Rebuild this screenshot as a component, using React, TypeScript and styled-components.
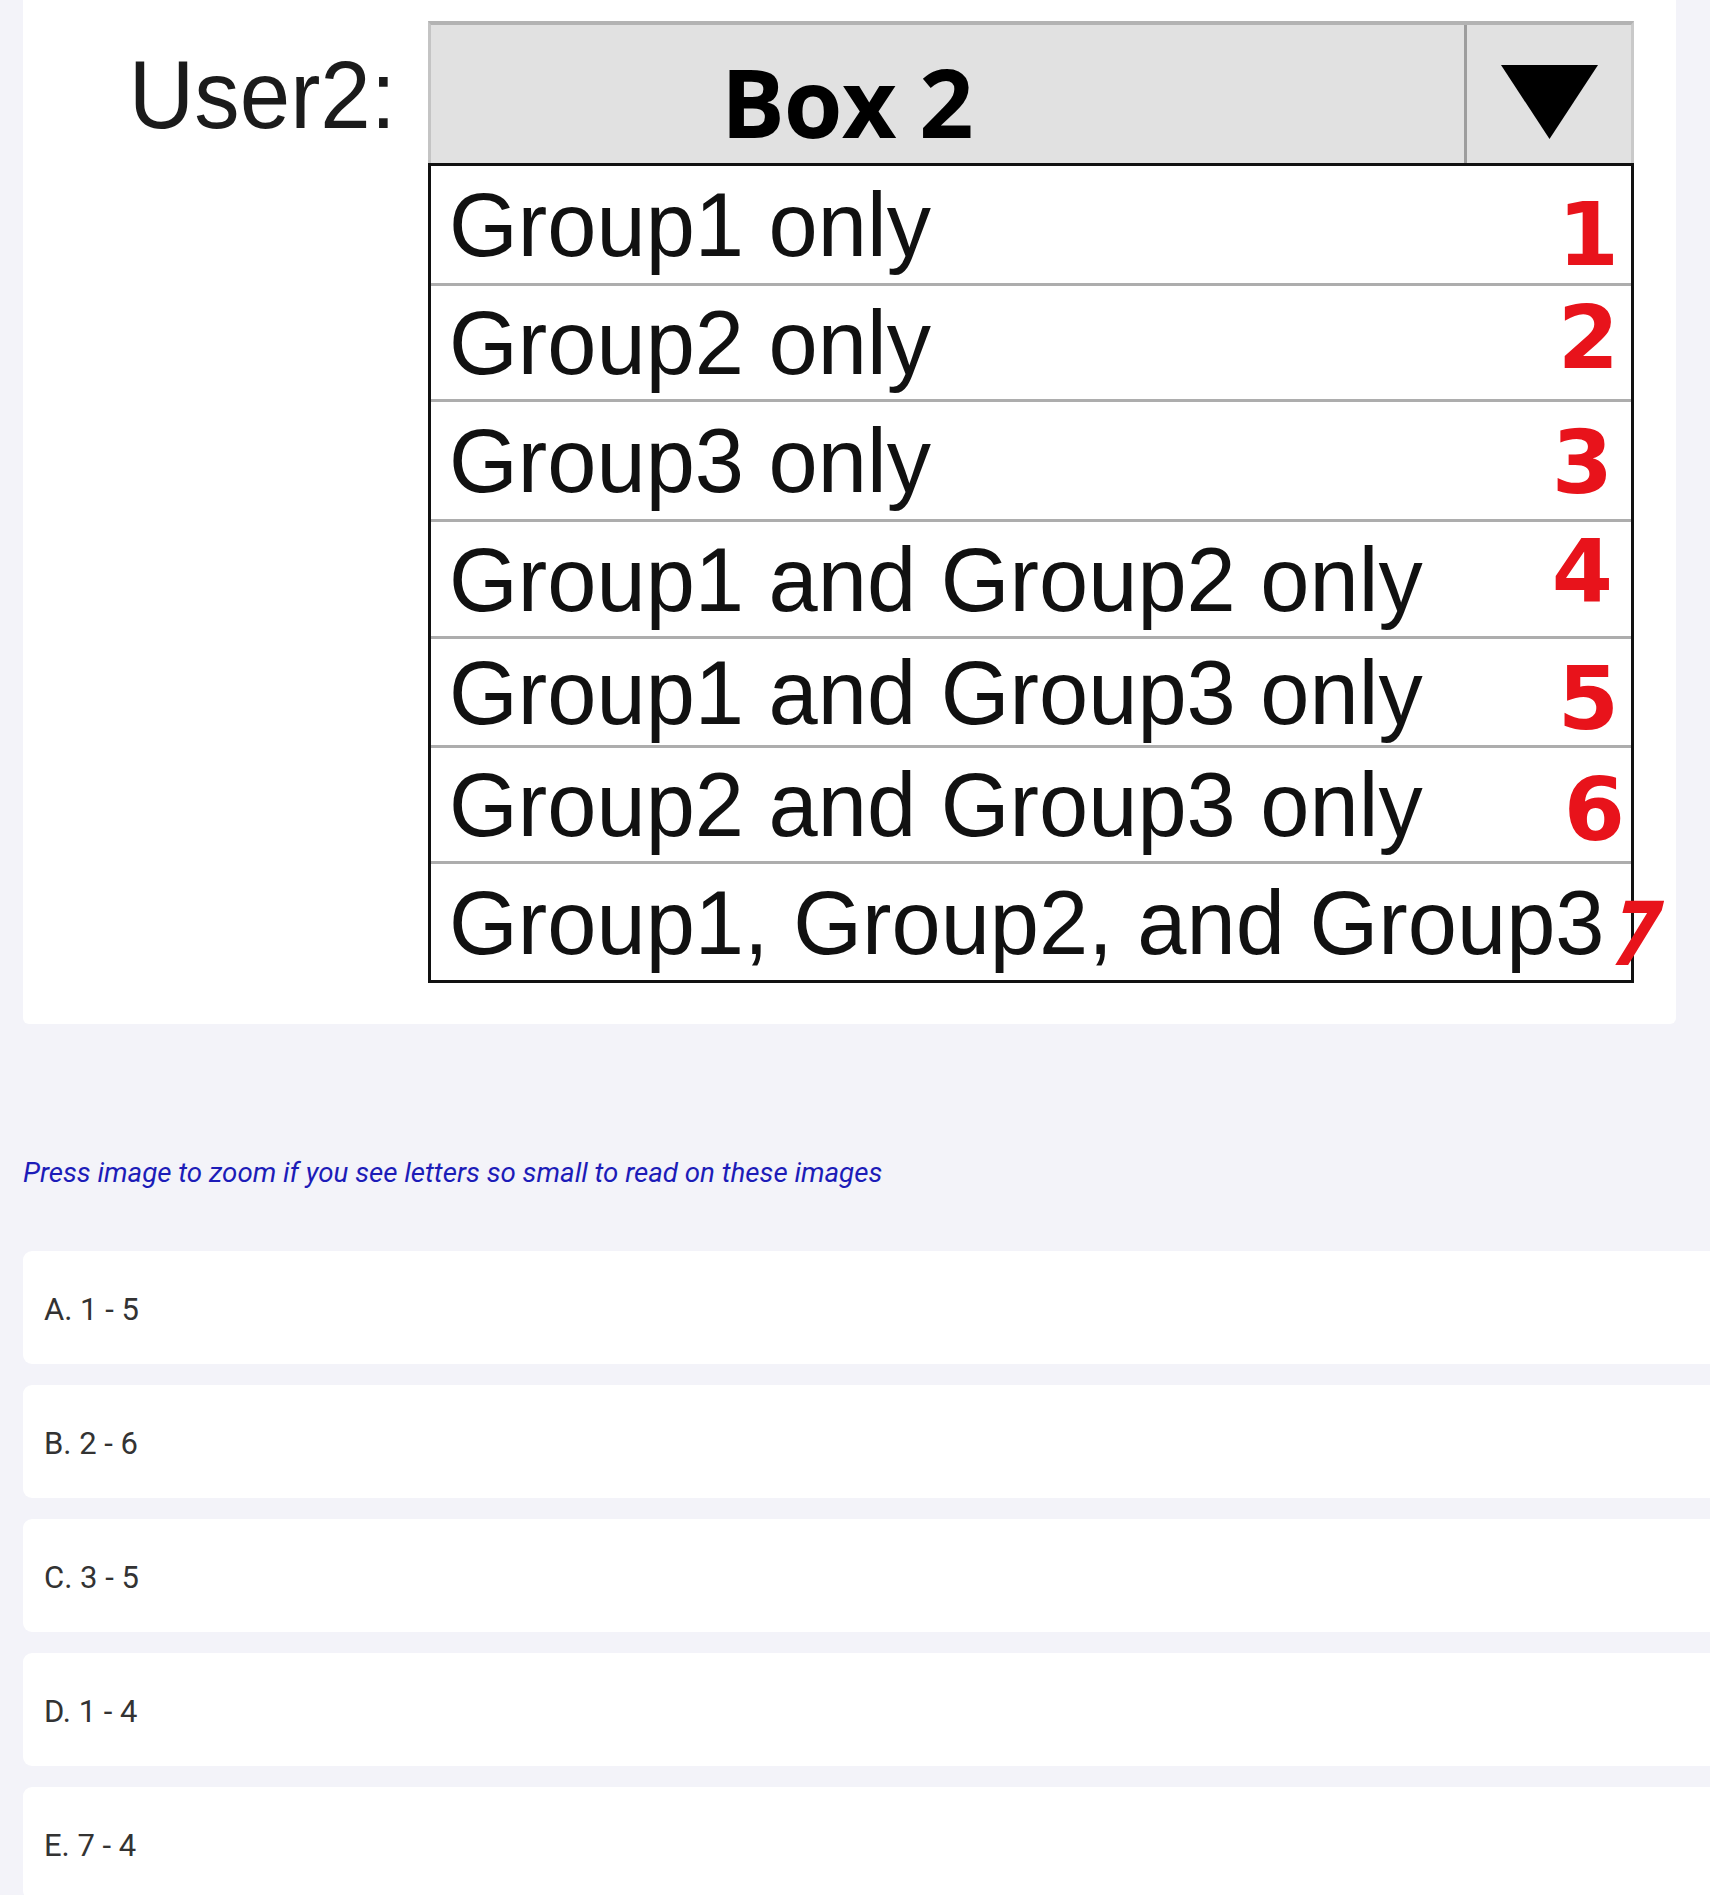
import React from "react";
import styled, { createGlobalStyle } from "styled-components";

const GlobalStyle = createGlobalStyle`
  html,
  body {
    margin: 0;
    padding: 0;
    background: #f3f3f9;
    overflow-x: hidden;
  }

  body {
    font-family: Roboto, "Liberation Sans", sans-serif;
  }
`;

const Page = styled.main`
  padding-left: 23px;
`;

const ImageCard = styled.section`
  display: flex;
  align-items: flex-start;
  box-sizing: border-box;
  width: 1653px;
  padding: 21px 0 41px;
  background: #fff;
  border-radius: 0 0 6px 6px;
`;

const Label = styled.div`
  flex-shrink: 0;
  width: 373px;
  margin: 25px 32px 0 0;
  text-align: right;
  font-family: "Liberation Sans", Arial, sans-serif;
  font-size: 97px;
  line-height: 1;
  color: #1b1b1b;
  transform: scaleX(0.935);
  transform-origin: right center;
`;

const Dropdown = styled.div`
  display: flex;
  flex-direction: column;
  width: 1206px;
`;

const Header = styled.div`
  display: flex;
  box-sizing: border-box;
  height: 142px;
  background: #e1e1e1;
  border-top: 4px solid #b3b3b3;
  border-left: 3px solid #c4c4c4;
  border-right: 3px solid #c9c9c9;
`;

const Selected = styled.div`
  flex: 1;
  display: flex;
  align-items: center;
  padding: 14px 0 0 290px;
  font-family: "Open Sans", "Liberation Sans", sans-serif;
  font-weight: 700;
  font-size: 95px;
  line-height: 1;
  color: #000;
  letter-spacing: -1px;
`;

const ArrowCell = styled.div`
  display: flex;
  align-items: center;
  justify-content: center;
  box-sizing: border-box;
  width: 167px;
  padding-top: 16px;
  border-left: 3px solid #9d9d9d;
`;

const List = styled.ul`
  list-style: none;
  margin: 0;
  padding: 0;
  border: 3px solid #111;
`;

const Row = styled.li<{ $h: number }>`
  position: relative;
  display: flex;
  align-items: center;
  justify-content: space-between;
  height: ${(p) => p.$h}px;
  padding: 0 12px 0 18px;
  border-bottom: 3px solid #adadad;
  white-space: nowrap;

  &:last-child {
    border-bottom: none;
  }
`;

const RowText = styled.span`
  flex-shrink: 0;
  display: inline-block;
  font-family: "Liberation Sans", Arial, sans-serif;
  font-size: 91px;
  line-height: 1;
  color: #111;
  transform: scaleX(0.972);
  transform-origin: left center;
`;

const Num = styled.span<{ $dx: number; $dy: number }>`
  display: inline-block;
  font-family: "DejaVu Sans", sans-serif;
  font-weight: 700;
  font-size: 88px;
  line-height: 1;
  color: #e8131b;
  transform: translate(${(p) => p.$dx}px, ${(p) => p.$dy}px);
`;

const Overflow = styled.span`
  position: absolute;
  right: -36px;
  top: 27px;
  font-family: "DejaVu Sans", sans-serif;
  font-weight: 700;
  font-size: 88px;
  line-height: 1;
  color: #e8131b;
  transform: skewX(-14deg) scaleX(0.8);
`;

const Note = styled.p`
  margin: 133px 0 62px;
  font-family: Roboto, "Liberation Sans", sans-serif;
  font-style: italic;
  font-size: 27.7px;
  line-height: 32px;
  color: #1c1cb8;
`;

const Options = styled.ul`
  display: flex;
  flex-direction: column;
  gap: 21px;
  list-style: none;
  margin: 0 -40px 0 0;
  padding: 0;
`;

const Option = styled.li`
  display: flex;
  align-items: center;
  box-sizing: border-box;
  height: 113px;
  padding: 4px 0 0 21px;
  background: #fff;
  border-radius: 9px;
  font-family: Roboto, "Liberation Sans", sans-serif;
  font-size: 31px;
  color: #333;
`;

const rows = [
  { text: "Group1 only", num: "1", h: 117, dx: 0, dy: 10 },
  { text: "Group2 only", num: "2", h: 113, dx: 0, dy: -5 },
  { text: "Group3 only", num: "3", h: 117, dx: -6, dy: 2 },
  { text: "Group1 and Group2 only", num: "4", h: 114, dx: -6, dy: -7 },
  { text: "Group1 and Group3 only", num: "5", h: 106, dx: 0, dy: 7 },
  { text: "Group2 and Group3 only", num: "6", h: 113, dx: 6, dy: 5 },
];

const answers = ["A. 1 - 5", "B. 2 - 6", "C. 3 - 5", "D. 1 - 4", "E. 7 - 4"];

const App = (): JSX.Element => {
  return (
    <Page>
      <GlobalStyle />
      <ImageCard>
        <Label>User2:</Label>
        <Dropdown>
          <Header>
            <Selected>Box 2</Selected>
            <ArrowCell>
              <svg width="97" height="74" viewBox="0 0 97 74">
                <polygon points="0,0 97,0 48.5,74" fill="#000" />
              </svg>
            </ArrowCell>
          </Header>
          <List>
            {rows.map((r) => (
              <Row key={r.num} $h={r.h}>
                <RowText>{r.text}</RowText>
                <Num $dx={r.dx} $dy={r.dy}>
                  {r.num}
                </Num>
              </Row>
            ))}
            <Row $h={116}>
              <RowText>Group1, Group2, and Group3</RowText>
              <Overflow>7</Overflow>
            </Row>
          </List>
        </Dropdown>
      </ImageCard>

      <Note>Press image to zoom if you see letters so small to read on these images</Note>

      <Options>
        {answers.map((a) => (
          <Option key={a}>{a}</Option>
        ))}
      </Options>
    </Page>
  );
};

export default App;
